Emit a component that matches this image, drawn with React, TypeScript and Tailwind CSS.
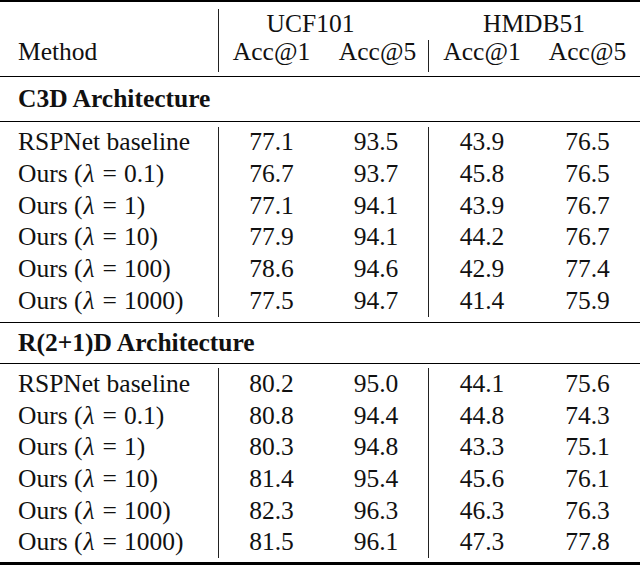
import React from "react";

type Row = { name: React.ReactNode; v: [string, string, string, string] };

const lam = (n: string) => (
  <>
    Ours (<span className="italic ml-[1px] mr-[1px]">λ</span>
    <span className="mx-[7px]">=</span>
    {n})
  </>
);

const c3d: Row[] = [
  { name: "RSPNet baseline", v: ["77.1", "93.5", "43.9", "76.5"] },
  { name: lam("0.1"), v: ["76.7", "93.7", "45.8", "76.5"] },
  { name: lam("1"), v: ["77.1", "94.1", "43.9", "76.7"] },
  { name: lam("10"), v: ["77.9", "94.1", "44.2", "76.7"] },
  { name: lam("100"), v: ["78.6", "94.6", "42.9", "77.4"] },
  { name: lam("1000"), v: ["77.5", "94.7", "41.4", "75.9"] },
];

const r21d: Row[] = [
  { name: "RSPNet baseline", v: ["80.2", "95.0", "44.1", "75.6"] },
  { name: lam("0.1"), v: ["80.8", "94.4", "44.8", "74.3"] },
  { name: lam("1"), v: ["80.3", "94.8", "43.3", "75.1"] },
  { name: lam("10"), v: ["81.4", "95.4", "45.6", "76.1"] },
  { name: lam("100"), v: ["82.3", "96.3", "46.3", "76.3"] },
  { name: lam("1000"), v: ["81.5", "96.1", "47.3", "77.8"] },
];

function DataRow({ r }: { r: Row }) {
  return (
    <div className="flex h-[31.7px] items-center">
      <div className="w-[218px] h-full flex items-center pl-[18px] whitespace-nowrap">{r.name}</div>
      <div className="w-[106px] h-full flex items-center justify-center border-l border-[#222]">{r.v[0]}</div>
      <div className="w-[104px] h-full flex items-center justify-center">{r.v[1]}</div>
      <div className="w-[107px] h-full flex items-center justify-center border-l border-[#222]">{r.v[2]}</div>
      <div className="w-[105px] h-full flex items-center justify-center">{r.v[3]}</div>
    </div>
  );
}

export default function App() {
  return (
    <div className="w-[640px] h-[567px] bg-white text-[#111] text-[25.5px] overflow-hidden font-['Liberation_Serif','Times_New_Roman',serif]">
      <div className="h-[2px] bg-black" />
      <div className="pt-[7px] pb-[4px]">
        <div className="flex h-[31px]">
          <div className="w-[218px]" />
          <div className="w-[210px] h-full flex items-center justify-center border-l border-[#222] pr-[26px] pb-[1px]">UCF101</div>
          <div className="w-[212px] h-full flex items-center justify-center pb-[1px]">HMDB51</div>
        </div>
        <div className="flex h-[32px]">
          <div className="w-[218px] h-full flex items-center pl-[18px] pb-[8px]">Method</div>
          <div className="w-[106px] h-full flex items-center justify-center border-l border-[#222] pb-[8px]">Acc@1</div>
          <div className="w-[104px] h-full flex items-center justify-center pb-[8px] pl-[3px]">Acc@5</div>
          <div className="w-[107px] h-full flex items-center justify-center border-l border-[#222] pb-[8px]">Acc@1</div>
          <div className="w-[105px] h-full flex items-center justify-center pb-[8px]">Acc@5</div>
        </div>
      </div>
      <div className="h-[1px] bg-black" />
      <div className="h-[44px] flex items-center pl-[18px] pt-[1px] font-bold">C3D Architecture</div>
      <div className="h-[1px] bg-black" />
      <div className="pt-[4.7px] pb-[5.1px]">
        {c3d.map((r, i) => (
          <DataRow key={i} r={r} />
        ))}
      </div>
      <div className="h-[1px] bg-black" />
      <div className="h-[40px] flex items-center pl-[18px] font-bold">R(2+1)D Architecture</div>
      <div className="h-[1px] bg-black" />
      <div className="pt-[4.4px] pb-[3.6px]">
        {r21d.map((r, i) => (
          <DataRow key={i} r={r} />
        ))}
      </div>
      <div className="h-[2.5px] bg-black" />
    </div>
  );
}
